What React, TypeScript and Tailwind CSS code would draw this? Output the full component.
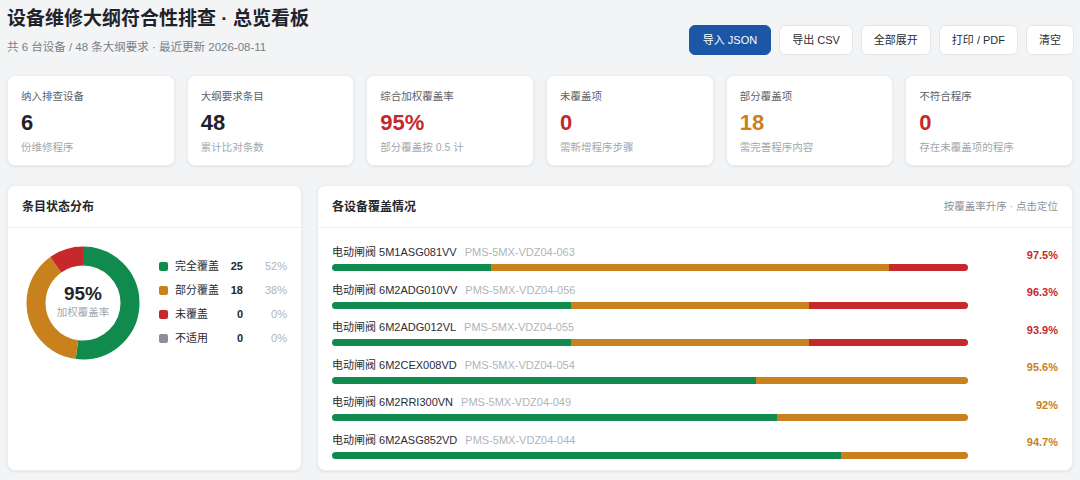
import React from "react"

const GREEN = "#118a4e"
const ORANGE = "#c8811c"
const RED = "#c6282b"
const GRAY = "#8b9098"

const stats = [
    {label: "纳入排查设备", value: "6", sub: "份维修程序", color: "#1f2329"},
    {label: "大纲要求条目", value: "48", sub: "累计比对条数", color: "#1f2329"},
    {label: "综合加权覆盖率", value: "95%", sub: "部分覆盖按 0.5 计", color: RED},
    {label: "未覆盖项", value: "0", sub: "需新增程序步骤", color: RED},
    {label: "部分覆盖项", value: "18", sub: "需完善程序内容", color: ORANGE},
    {label: "不符合程序", value: "0", sub: "存在未覆盖项的程序", color: RED},
]

const legend = [
    {label: "完全覆盖", count: 25, pct: "52%", color: GREEN},
    {label: "部分覆盖", count: 18, pct: "38%", color: ORANGE},
    {label: "未覆盖", count: 0, pct: "0%", color: RED},
    {label: "不适用", count: 0, pct: "0%", color: GRAY},
]

const devices = [
    {name: "电动闸阀 5M1ASG081VV", code: "PMS-5MX-VDZ04-063", segs: [25, 62.5, 12.5], pct: "97.5%", pctColor: RED},
    {name: "电动闸阀 6M2ADG010VV", code: "PMS-5MX-VDZ04-056", segs: [37.5, 37.5, 25], pct: "96.3%", pctColor: RED},
    {name: "电动闸阀 6M2ADG012VL", code: "PMS-5MX-VDZ04-055", segs: [37.5, 37.5, 25], pct: "93.9%", pctColor: RED},
    {name: "电动闸阀 6M2CEX008VD", code: "PMS-5MX-VDZ04-054", segs: [66.7, 33.3, 0], pct: "95.6%", pctColor: ORANGE},
    {name: "电动闸阀 6M2RRI300VN", code: "PMS-5MX-VDZ04-049", segs: [70, 30, 0], pct: "92%", pctColor: ORANGE},
    {name: "电动闸阀 6M2ASG852VD", code: "PMS-5MX-VDZ04-044", segs: [80, 20, 0], pct: "94.7%", pctColor: ORANGE},
]

function Donut() {
    const r = 47
    const c = 2 * Math.PI * r
    const parts = [
        {frac: 0.52, color: GREEN},
        {frac: 0.38, color: ORANGE},
        {frac: 0.10, color: RED},
    ]
    let offset = 0
    return <div className="relative w-[114px] h-[114px] shrink-0">
        <svg width="114" height="114" viewBox="0 0 114 114" className="-rotate-90">
            {parts.map((p, i) => {
                const el = <circle key={i} cx="57" cy="57" r={r} fill="none" stroke={p.color} strokeWidth="19"
                                   strokeDasharray={`${p.frac * c} ${c}`} strokeDashoffset={-offset * c}/>
                offset += p.frac
                return el
            })}
        </svg>
        <div className="absolute inset-0 flex flex-col items-center justify-center">
            <div className="text-[19px] font-bold leading-none text-[#24272c] mt-[-4px]">95%</div>
            <div className="text-[10.5px] text-[#a3a7ad] mt-[4px] leading-none">加权覆盖率</div>
        </div>
    </div>
}

export default function App() {
    return <div
        className="w-[1080px] h-[480px] bg-[#f3f4f6] px-[7px] overflow-hidden"
        style={{fontFamily: '"Liberation Sans", "Noto Sans CJK SC", sans-serif'}}>
        <div className="flex justify-between items-start">
            <div className="pt-[5px]">
                <h1 className="text-[19px] font-bold text-[#1f2329] leading-[28px]">设备维修大纲符合性排查 · 总览看板</h1>
                <p className="text-[11.5px] text-[#7a7f87] mt-[6px] leading-[16px]">共 6 台设备 / 48 条大纲要求 · 最近更新 2026-08-11</p>
            </div>
            <div className="flex gap-2 mt-[25px] mr-[-1px]">
                <button className="h-[30px] px-[13px] rounded-md bg-[#1c56a6] text-white text-[11px] border border-[#1c56a6]">导入 JSON</button>
                {["导出 CSV", "全部展开", "打印 / PDF", "清空"].map(t =>
                    <button key={t}
                            className="h-[30px] px-[12px] rounded-md bg-white text-[#2a2d33] text-[11px] border border-[#e3e5e8]">{t}</button>)}
            </div>
        </div>

        <div className="grid grid-cols-6 gap-3 mt-[20px]">
            {stats.map(s => <div key={s.label}
                                 className="bg-white rounded-lg shadow-[0_1px_3px_rgba(0,0,0,0.08)] border border-[#eceef1] h-[91px] px-[13px] pt-[12px]">
                <div className="text-[10.5px] text-[#5c6168] leading-[16px]">{s.label}</div>
                <div className="text-[22px] font-bold leading-[26px] mt-[6px]" style={{color: s.color}}>{s.value}</div>
                <div className="text-[10.5px] text-[#a3a7ad] leading-[16px] mt-[3px]">{s.sub}</div>
            </div>)}
        </div>

        <div className="grid grid-cols-[295px_1fr] gap-[15px] mt-[19px] h-[286px]">
            <div className="bg-white rounded-lg shadow-[0_1px_3px_rgba(0,0,0,0.08)] border border-[#eceef1] flex flex-col">
                <div className="h-[42px] flex items-center px-[14px] border-b border-[#f0f1f3]">
                    <span className="text-[12px] font-bold text-[#24272c]">条目状态分布</span>
                </div>
                <div className="flex items-center pl-[18px] pt-[18px]">
                    <Donut/>
                    <div className="ml-[19px] flex flex-col gap-[8px] mt-[-1px]">
                        {legend.map(l => <div key={l.label} className="flex items-center h-[16px] text-[11px]">
                            <span className="w-[9px] h-[9px] rounded-[2px]" style={{background: l.color}}/>
                            <span className="ml-[7px] w-[50px] text-[#2a2d33]">{l.label}</span>
                            <span className="w-[18px] text-right font-bold text-[#24272c]">{l.count}</span>
                            <span className="w-[44px] text-right text-[#b0b4ba]">{l.pct}</span>
                        </div>)}
                    </div>
                </div>
            </div>

            <div className="bg-white rounded-lg shadow-[0_1px_3px_rgba(0,0,0,0.08)] border border-[#eceef1] flex flex-col">
                <div className="h-[42px] flex items-center justify-between px-[14px] border-b border-[#f0f1f3]">
                    <span className="text-[12px] font-bold text-[#24272c]">各设备覆盖情况</span>
                    <span className="text-[10.5px] text-[#8d9198]">按覆盖率升序 · 点击定位</span>
                </div>
                <div className="flex flex-col pl-[14px] pr-[14px] pt-[11px]">
                    {devices.map(d => <div key={d.code} className="flex items-center h-[37.5px]">
                        <div className="w-[636px]">
                            <div className="text-[11px] leading-[16px] whitespace-nowrap">
                                <span className="text-[#2a2d33]">{d.name}</span>
                                <span className="ml-[8px] text-[#b0b4ba]">{d.code}</span>
                            </div>
                            <div className="flex h-[7px] rounded-full overflow-hidden mt-[4px]">
                                <div style={{width: `${d.segs[0]}%`, background: GREEN}}/>
                                <div style={{width: `${d.segs[1]}%`, background: ORANGE}}/>
                                <div style={{width: `${d.segs[2]}%`, background: RED}}/>
                            </div>
                        </div>
                        <div className="flex-1 text-right text-[11px] font-bold mt-[-6px]" style={{color: d.pctColor}}>{d.pct}</div>
                    </div>)}
                </div>
            </div>
        </div>
    </div>
}
